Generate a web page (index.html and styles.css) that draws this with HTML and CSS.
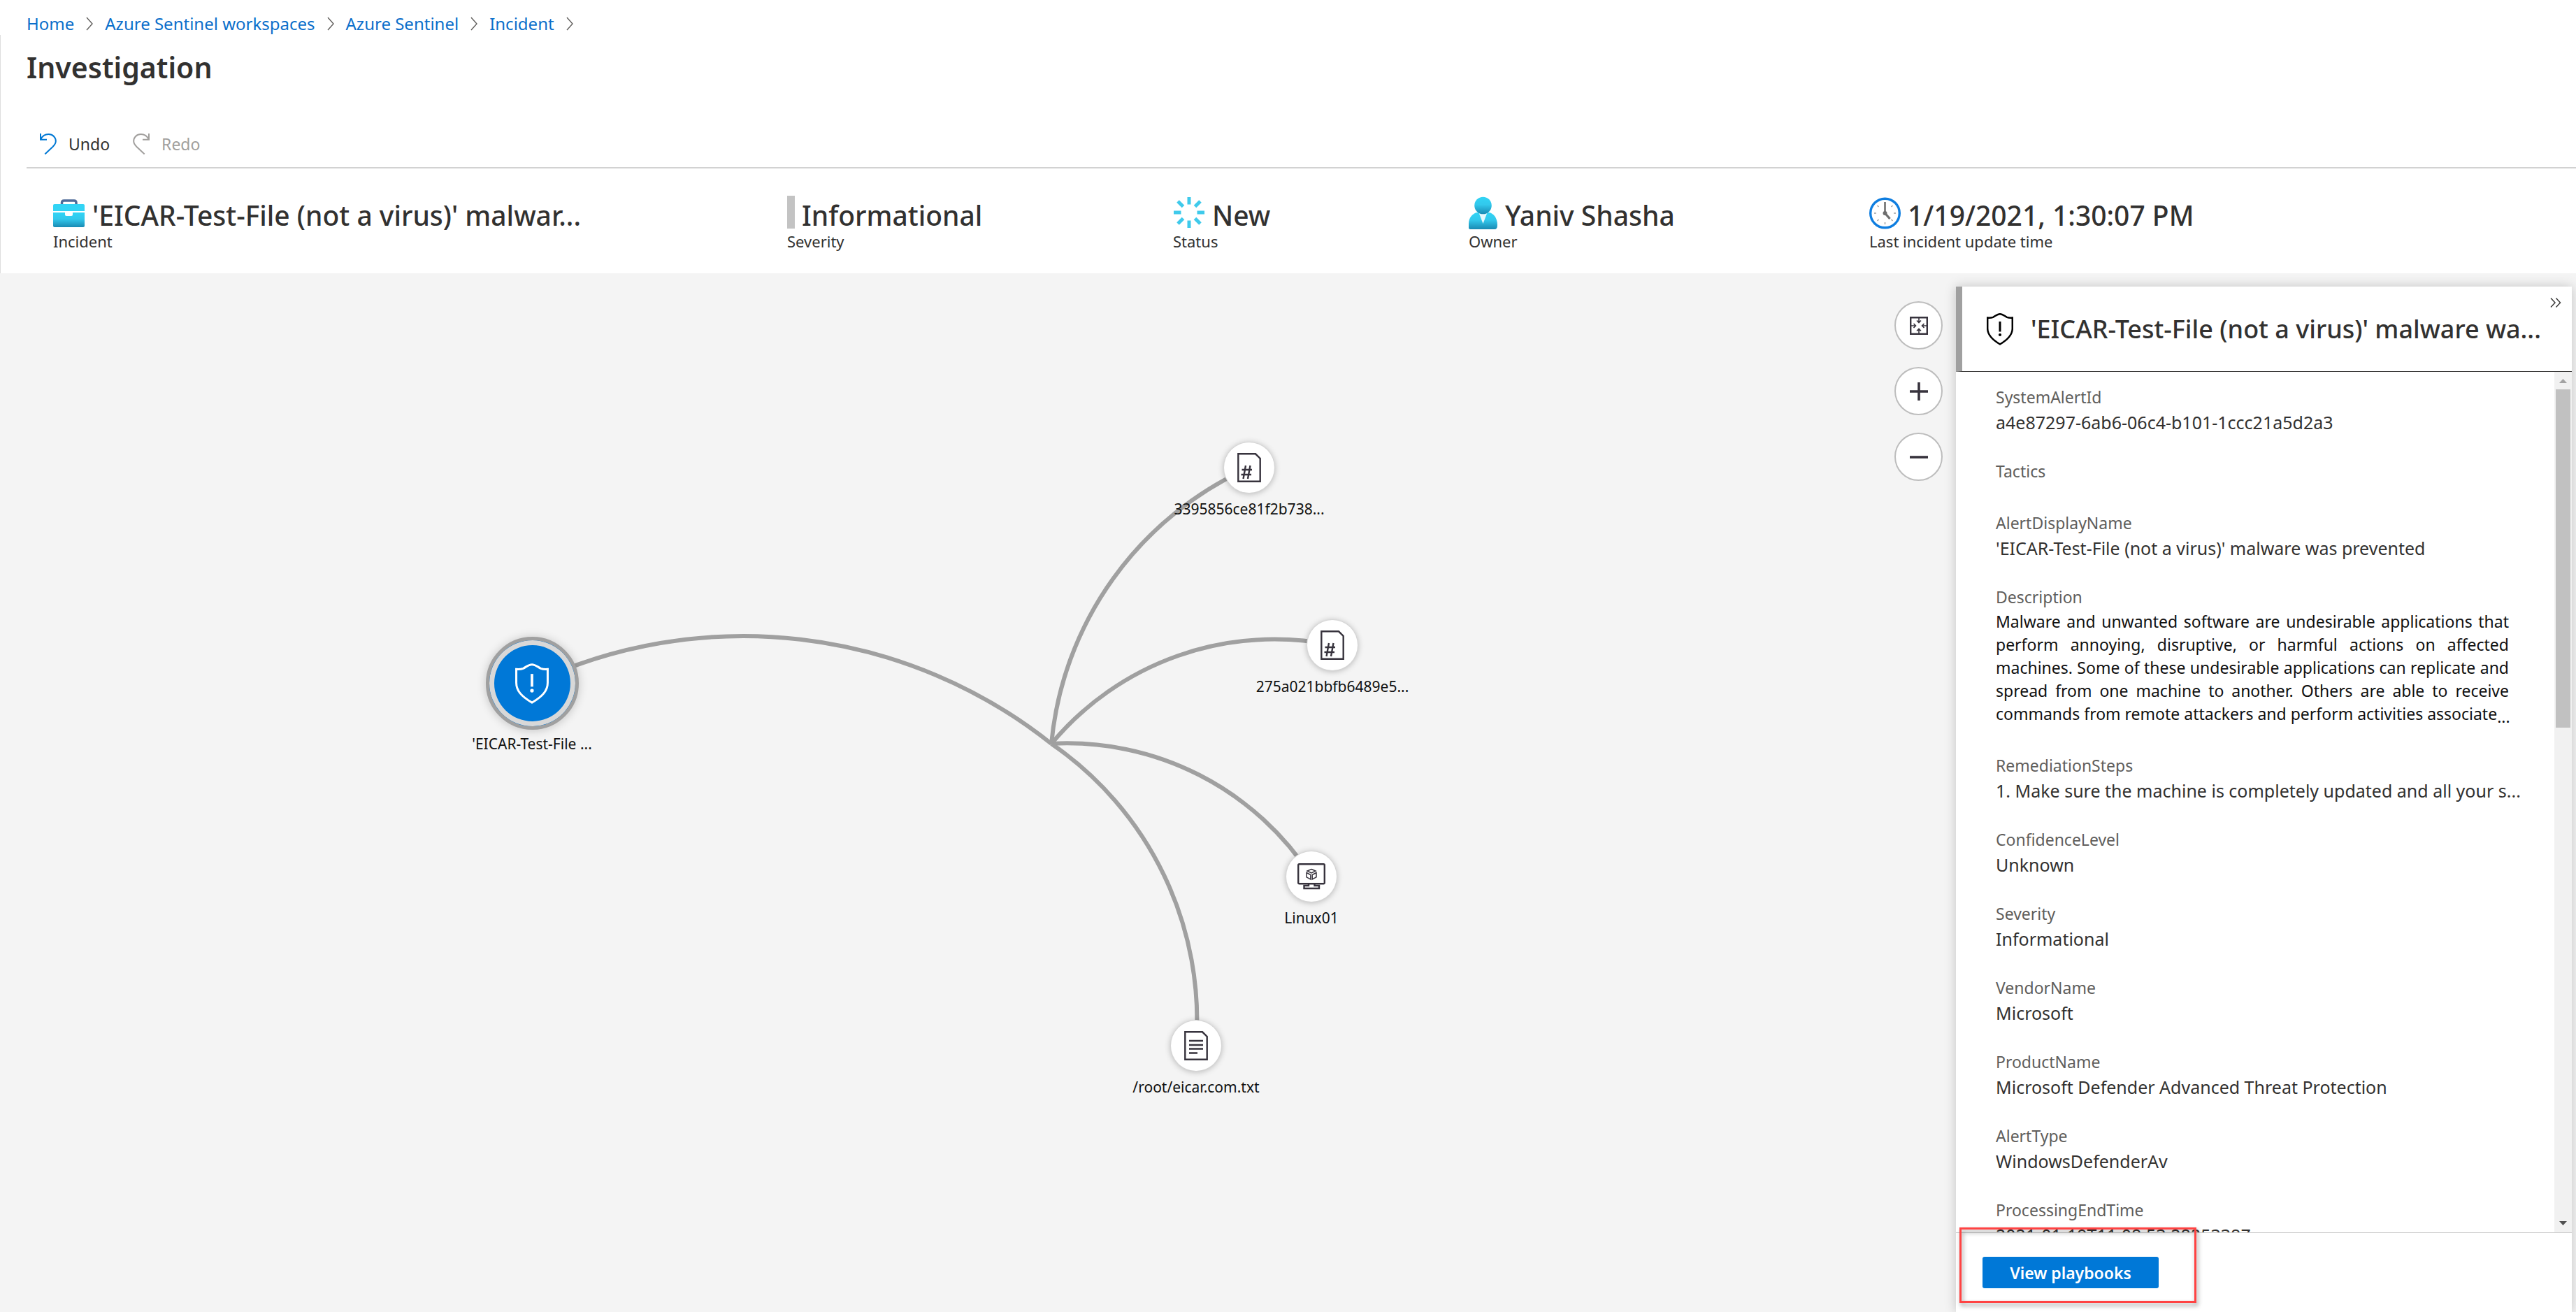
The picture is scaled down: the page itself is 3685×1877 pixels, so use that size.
FILE: index.html
```html
<!DOCTYPE html>
<html lang="en">
<head>
<meta charset="utf-8">
<title>Investigation - Azure Sentinel</title>
<link rel="stylesheet" href="styles.css">
</head>
<body>
<div class="app">
  <nav class="breadcrumb" aria-label="Breadcrumb">
    <a href="#">Home</a>
    <svg class="sep" width="10" height="20" viewBox="0 0 10 20" aria-hidden="true"><path d="M1 1L9 10L1 19"/></svg>
    <a href="#">Azure Sentinel workspaces</a>
    <svg class="sep" width="10" height="20" viewBox="0 0 10 20" aria-hidden="true"><path d="M1 1L9 10L1 19"/></svg>
    <a href="#">Azure Sentinel</a>
    <svg class="sep" width="10" height="20" viewBox="0 0 10 20" aria-hidden="true"><path d="M1 1L9 10L1 19"/></svg>
    <a href="#">Incident</a>
    <svg class="sep" width="10" height="20" viewBox="0 0 10 20" aria-hidden="true"><path d="M1 1L9 10L1 19"/></svg>
  </nav>

  <header class="top">
    <h1>Investigation</h1>
    <div class="toolbar">
      <button type="button" class="cmd">
        <svg width="24" height="30" viewBox="0 0 24 30" aria-hidden="true"><path d="M1 0V8.700H10M1 8.700C3.500 3.500 8 1 12.500 1C18.500 1 22.800 5.500 22.800 11C22.800 14.500 21 16.500 18.500 19L7.300 29.500"/></svg>
        Undo
      </button>
      <button type="button" class="cmd" disabled>
        <svg width="24" height="30" viewBox="0 0 24 30" aria-hidden="true"><path d="M23 0V8.700H14M23 8.700C20.500 3.500 16 1 11.500 1C5.500 1 1.200 5.500 1.200 11C1.200 14.500 3 16.500 5.500 19L16.700 29.500"/></svg>
        Redo
      </button>
    </div>
    <div class="stats">
      <div class="stat">
        <div class="stat-value">
          <svg width="46" height="48" viewBox="0 0 46 48" aria-hidden="true">
            <defs><linearGradient id="cyan" x1="0" y1="0" x2="0" y2="1"><stop offset="0" stop-color="#32d4f5"/><stop offset=".45" stop-color="#32c8ec"/><stop offset="1" stop-color="#198ab3"/></linearGradient></defs>
            <path d="M12.500 13V10Q12.500 7 15.500 7H30Q33 7 33 10V13" fill="none" stroke="#4f6b98" stroke-width="3.500"/>
            <path d="M2 12H43Q45 12 45 14V22H0V14Q0 12 2 12Z" fill="#32d4f5"/>
            <path d="M0 24H45V43Q45 45 43 45H2Q0 45 0 43Z" fill="url(#cyan)"/>
            <path d="M17 22H28V27Q28 29 26 29H19Q17 29 17 27Z" fill="#fff"/>
          </svg>
          <span>'EICAR-Test-File (not a virus)' malwar...</span>
        </div>
        <div class="stat-label">Incident</div>
      </div>
      <div class="stat">
        <div class="stat-value"><i class="severity"></i><span>Informational</span></div>
        <div class="stat-label">Severity</div>
      </div>
      <div class="stat">
        <div class="stat-value">
          <svg width="46" height="48" viewBox="-23 -24 46 48" aria-hidden="true"><path d="M0-22V-11.500M0 22V11.500M-22 0H-11.500M22 0H11.500M-16-16L-8.500-8.500M16-16L8.500-8.500M-16 16L-8.500 8.500M16 16L8.500 8.500" stroke="#3fcaeb" stroke-width="5"/></svg>
          <span>New</span>
        </div>
        <div class="stat-label">Status</div>
      </div>
      <div class="stat">
        <div class="stat-value">
          <svg width="42" height="48" viewBox="0 0 42 48" aria-hidden="true">
            <path d="M0 46V40C0 31 6 25 12 24H29C35 25 41 31 41 42Q41 48 37 48H2Q0 48 0 46Z" fill="url(#cyan)"/>
            <path d="M14 23H27L20.500 40Z" fill="#e6f9fd"/>
            <circle cx="20.500" cy="14" r="12.300" fill="url(#cyan)"/>
          </svg>
          <span>Yaniv Shasha</span>
        </div>
        <div class="stat-label">Owner</div>
      </div>
      <div class="stat">
        <div class="stat-value">
          <svg width="45" height="48" viewBox="0 0 45 48" aria-hidden="true">
            <circle cx="22.500" cy="25" r="20.800" fill="#fff" stroke="#0f7ee0" stroke-width="3.400"/>
            <path d="M22.500 38V41M7 25H10M35 25H38M11.500 14L13.500 16M33.500 14L31.500 16M11.500 36L13.500 34M33.500 36L31.500 34" stroke="#a0a0a0" stroke-width="1.500"/>
            <path d="M22.500 9V25" stroke="#6e6e6e" stroke-width="2.600"/>
            <path d="M22.500 25L29.500 33" stroke="#6e6e6e" stroke-width="3.400"/>
            <circle cx="22.500" cy="25" r="3" fill="#6e6e6e"/>
          </svg>
          <span>1/19/2021, 1:30:07 PM</span>
        </div>
        <div class="stat-label">Last incident update time</div>
      </div>
    </div>
  </header>

  <main class="stage">
    <div class="canvas">
      <svg class="edges" aria-hidden="true">
        <path d="M761 587A707 707 0 0 1 1504 673"/>
        <path d="M1504 673A482 482 0 0 1 1787 278"/>
        <path d="M1504 673A415 415 0 0 1 1906 532"/>
        <path d="M1504 673A415 415 0 0 1 1876 863"/>
        <path d="M1504 673A480 480 0 0 1 1711 1105"/>
      </svg>
      <div class="node node-alert">
        <div class="disc">
          <svg width="48" height="58" viewBox="0 0 38 46" fill="none" aria-hidden="true"><path d="M19 1.300C15 1.300 12 4.500 9 5.800C6.500 6.800 4 6.800 1.200 6.600V22C1.200 31 7 37.500 19 44.500C31 37.500 36.800 31 36.800 22V6.600C34 6.800 31.500 6.800 29 5.800C26 4.500 23 1.300 19 1.300Z" stroke="#fff" stroke-width="2.400"/><path d="M19 12V26.500" stroke="#fff" stroke-width="3"/><circle cx="19" cy="31" r="2.100" fill="#fff"/></svg>
        </div>
        <span>'EICAR-Test-File ...</span>
      </div>
      <div class="node node-hash-a">
        <div class="disc"><svg class="glyph" width="34" height="42" viewBox="0 0 34 42" aria-hidden="true"><path d="M1.300 1.300H26L32.700 8V40.700H1.300Z"/><path d="M12 18L8.500 37M18.500 18L15 37M6.500 24H21M5.500 31H20"/></svg></div>
        <span>3395856ce81f2b738...</span>
      </div>
      <div class="node node-hash-b">
        <div class="disc"><svg class="glyph" width="34" height="42" viewBox="0 0 34 42" aria-hidden="true"><path d="M1.300 1.300H26L32.700 8V40.700H1.300Z"/><path d="M12 18L8.500 37M18.500 18L15 37M6.500 24H21M5.500 31H20"/></svg></div>
        <span>275a021bbfb6489e5...</span>
      </div>
      <div class="node node-host">
        <div class="disc"><svg class="glyph" width="40" height="38" viewBox="0 0 40 38" aria-hidden="true"><rect x="1.200" y="1.200" width="37.600" height="28" rx="1.500"/><path d="M16 29V32H9.500V36H31V32H24.500V29"/><path stroke-width="1.500" d="M20 8.500L26 11L20 14L14 11ZM13 13.500L18.800 16.500V23L13 19.800ZM27 13.500L21.200 16.500V23L27 19.800Z"/></svg></div>
        <span>Linux01</span>
      </div>
      <div class="node node-file">
        <div class="disc"><svg class="glyph" width="34" height="42" viewBox="0 0 34 42" aria-hidden="true"><path d="M1.300 1.300H26L32.700 8V40.700H1.300Z"/><path d="M7 14H27M7 20H27M7 25.500H27M7 31.500H19"/></svg></div>
        <span>/root/eicar.com.txt</span>
      </div>
    </div>

    <div class="zoom">
      <button type="button" aria-label="Fit to screen"><svg width="26" height="26" viewBox="0 0 26 26" aria-hidden="true"><path stroke-width="2.400" d="M1.200 1.200H24.800V24.800H1.200Z"/><path stroke-width="1.600" d="M13 2V8.500M10 5.500L13 8.500L16 5.500M13 24V17.500M10 20.500L13 17.500L16 20.500M2 13H8.500M5.500 10L8.500 13L5.500 16M24 13H17.500M20.500 10L17.500 13L20.500 16"/></svg></button>
      <button type="button" aria-label="Zoom in"><svg width="26" height="26" viewBox="0 0 26 26" aria-hidden="true"><path stroke-width="3.600" d="M0 13H26M13 0V26"/></svg></button>
      <button type="button" aria-label="Zoom out"><svg width="26" height="26" viewBox="0 0 26 26" aria-hidden="true"><path stroke-width="3.600" d="M0 13H26"/></svg></button>
    </div>

    <aside class="panel">
      <div class="panel-head">
        <svg width="38" height="46" viewBox="0 0 38 46" fill="none" aria-hidden="true"><path d="M19 1.300C15 1.300 12 4.500 9 5.800C6.500 6.800 4 6.800 1.200 6.600V22C1.200 31 7 37.500 19 44.500C31 37.500 36.800 31 36.800 22V6.600C34 6.800 31.500 6.800 29 5.800C26 4.500 23 1.300 19 1.300Z" stroke="#000" stroke-width="2.500"/><path d="M19 12V26.500" stroke="#000" stroke-width="3"/><circle cx="19" cy="31" r="2.100" fill="#000"/></svg>
        <h2>'EICAR-Test-File (not a virus)' malware wa...</h2>
        <button type="button" class="collapse" aria-label="Collapse panel"><svg width="16" height="14" viewBox="0 0 16 14" fill="none" stroke="#3b3a39" stroke-width="1.500" aria-hidden="true"><path d="M1 .500L7 7L1 13.500M8.500 .500L14.500 7L8.500 13.500"/></svg></button>
      </div>
      <div class="panel-body">
        <dl class="details">
          <div><dt>SystemAlertId</dt><dd>a4e87297-6ab6-06c4-b101-1ccc21a5d2a3</dd></div>
          <div><dt>Tactics</dt><dd></dd></div>
          <div><dt>AlertDisplayName</dt><dd>'EICAR-Test-File (not a virus)' malware was prevented</dd></div>
          <div><dt>Description</dt>
            <dd class="prose">
              <span>Malware and unwanted software are undesirable applications that</span>
              <span>perform annoying, disruptive, or harmful actions on affected</span>
              <span>machines. Some of these undesirable applications can replicate and</span>
              <span>spread from one machine to another. Others are able to receive</span>
              <span class="last">commands from remote attackers and perform activities associate<b class="more">...</b></span>
            </dd>
          </div>
          <div><dt>RemediationSteps</dt><dd>1. Make sure the machine is completely updated and all your s...</dd></div>
          <div><dt>ConfidenceLevel</dt><dd>Unknown</dd></div>
          <div><dt>Severity</dt><dd>Informational</dd></div>
          <div><dt>VendorName</dt><dd>Microsoft</dd></div>
          <div><dt>ProductName</dt><dd>Microsoft Defender Advanced Threat Protection</dd></div>
          <div><dt>AlertType</dt><dd>WindowsDefenderAv</dd></div>
          <div><dt>ProcessingEndTime</dt><dd>2021-01-19T11:08:53.2825338Z</dd></div>
        </dl>
        <div class="scrollbar" aria-hidden="true">
          <svg width="25" height="25" viewBox="0 0 25 25"><path d="M7 16L12.500 10L18 16Z" fill="#a3a3a3"/></svg>
          <div class="track"><div class="thumb"></div></div>
          <svg width="25" height="25" viewBox="0 0 25 25"><path d="M7 9L12.500 15L18 9Z" fill="#505050"/></svg>
        </div>
      </div>
      <div class="panel-foot">
        <button type="button" class="primary">View playbooks</button>
        <div class="callout"></div>
      </div>
    </aside>
  </main>
</div>
</body>
</html>
```
FILE: styles.css
```css
* { box-sizing: border-box; }

body {
  margin: 0;
  background: #fff;
  color: #323130;
  font-family: "Noto Sans", "Open Sans", sans-serif;
  font-size: 23px;
}

button { font-family: inherit; margin: 0; padding: 0; border: 0; background: none; }
svg { display: block; flex: none; }

.app { display: flex; flex-direction: column; height: 100vh; overflow: hidden; }

/* Breadcrumb */
.breadcrumb {
  display: flex;
  align-items: center;
  gap: 17px;
  padding: 17px 38px 0;
  font-size: 24px;
  line-height: 33px;
}
.breadcrumb a { color: #0b6fcb; text-decoration: none; white-space: nowrap; }
.sep { fill: none; stroke: #605e5c; stroke-width: 1.4px; }

/* Title, commands and incident summary */
.top { box-shadow: inset 1px 0 #dedede; padding-left: 38px; }
h1 { margin: 0; padding-top: 18px; font-size: 41px; line-height: 56px; font-weight: 600; }

.toolbar {
  display: flex;
  gap: 33px;
  margin-top: 66px;
  padding: 0 0 17px 19px;
  border-bottom: 2px solid #d2d2d2;
}
.cmd { display: flex; align-items: center; gap: 17px; font-size: 23px; line-height: 32px; color: #323130; }
.cmd svg { fill: none; stroke: #0078d4; stroke-width: 2; }
.cmd:disabled { color: #a19f9d; }
.cmd:disabled svg { stroke: #a19f9d; }

.stats {
  display: grid;
  grid-template-columns: 1050fr 552fr 423fr 573fr 1011fr;
  padding: 39px 0 37px 38px;
}
.stat-value { display: flex; gap: 10px; font-size: 39px; line-height: 56px; font-weight: 500; white-space: nowrap; }
.stat-label { font-size: 22px; line-height: 18px; }
.severity { width: 11px; height: 47px; background: #c3c3c3; }

/* Graph */
.stage { flex: 1; min-height: 0; display: flex; background: #f4f4f4; }
.canvas { flex: 1; min-width: 0; position: relative; overflow: hidden; }
.edges { width: 100%; height: 100%; fill: none; stroke: #a0a0a0; stroke-width: 6; }

.node {
  position: absolute;
  width: 240px;
  display: flex;
  flex-direction: column;
  align-items: center;
  gap: 8px;
  font-size: 21px;
  line-height: 30px;
  color: #111;
  white-space: nowrap;
}
.disc {
  display: flex;
  align-items: center;
  justify-content: center;
  width: 72px;
  height: 72px;
  border-radius: 50%;
  background: #fff;
  box-shadow: 0 0 0 1px #d6d6d6, 0 1px 10px rgba(0, 0, 0, .3);
}
.glyph { fill: none; stroke: #37333d; stroke-width: 2.4px; }
.node-alert { left: 641px; top: 520px; gap: 5px; }
.node-alert .disc {
  width: 133px;
  height: 133px;
  background: #0078d7;
  border: 5px solid #a0a0a0;
  box-shadow: inset 0 0 0 7px #d8d8d8, 0 1px 14px rgba(0, 0, 0, .2);
}
.node-hash-a { left: 1667px; top: 242px; }
.node-hash-b { left: 1786px; top: 496px; }
.node-host { left: 1756px; top: 827px; }
.node-file { left: 1591px; top: 1069px; }

.zoom { display: flex; flex-direction: column; gap: 25px; padding: 40px 19px 0 0; }
.zoom button {
  display: flex;
  align-items: center;
  justify-content: center;
  width: 69px;
  height: 69px;
  border: 2px solid #bdbdbd;
  border-radius: 50%;
  background: #fff;
}
.zoom svg { fill: none; stroke: #37333d; }

/* Details panel */
.panel {
  display: flex;
  flex-direction: column;
  width: 881px;
  margin: 19px 6px 0 0;
  background: #fff;
  box-shadow: 0 0 16px rgba(0, 0, 0, .2);
}
.panel-head {
  position: relative;
  display: flex;
  align-items: center;
  gap: 25px;
  height: 122px;
  padding-left: 35px;
  border-left: 9px solid #a0a0a0;
  border-bottom: 1px solid #3b3a39;
}
.panel-head h2 { margin: 0; font-size: 36px; line-height: 50px; font-weight: 500; white-space: nowrap; }
.collapse { position: absolute; top: 16px; right: 15px; }

.panel-body { flex: 1; min-height: 0; display: flex; overflow: hidden; }
.details {
  flex: 1;
  min-width: 0;
  display: flex;
  flex-direction: column;
  gap: 34px;
  margin: 0;
  padding: 18px 0 0 57px;
  line-height: 36px;
  white-space: nowrap;
}
.details dt { color: #605e5c; }
.details dd { margin: 0; font-size: 25px; }
.details dd:empty { height: 4px; }
.details .prose {
  width: 734px;
  padding: 1px 0 5px;
  font-size: 23px;
  line-height: 33px;
  color: #111;
  text-align: justify;
  text-align-last: justify;
  white-space: normal;
}
.prose span { display: block; }
.prose .last { white-space: nowrap; }
.more { font-weight: 400; vertical-align: -4px; line-height: 1px; }

.scrollbar { display: flex; flex-direction: column; width: 25px; background: #f1f1f1; }
.track { flex: 1; padding: 0 2px; }
.thumb { height: 41%; background: #c1c1c1; }

.panel-foot { position: relative; height: 114px; padding: 34px 38px; border-top: 1px solid #ccc; }
.primary {
  display: block;
  width: 252px;
  height: 45px;
  border-radius: 3px;
  background: #0078d7;
  color: #fff;
  font-size: 23px;
  font-weight: 600;
}
.callout {
  position: absolute;
  left: 5px;
  top: -8px;
  width: 339px;
  height: 108px;
  border: 3px solid #ff4343;
  filter: drop-shadow(2px 4px 3px rgba(0, 0, 0, .4));
  pointer-events: none;
}
```
